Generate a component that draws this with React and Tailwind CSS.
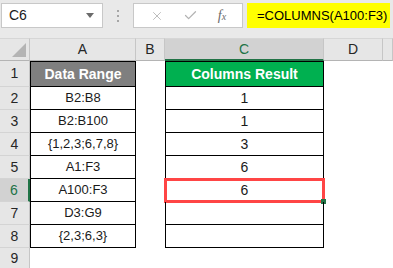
import React from 'react';
import { X, Check } from 'lucide-react';

const rows = [
  { n: 1, a: 'Data Range', c: 'Columns Result', head: true },
  { n: 2, a: 'B2:B8', c: '1' },
  { n: 3, a: 'B2:B100', c: '1' },
  { n: 4, a: '{1,2,3;6,7,8}', c: '3' },
  { n: 5, a: 'A1:F3', c: '6' },
  { n: 6, a: 'A100:F3', c: '6', selected: true },
  { n: 7, a: 'D3:G9', c: '' },
  { n: 8, a: '{2,3;6,3}', c: '' },
];

const App = () => {
  return (
    <div
      className="w-[393px] h-[268px] overflow-hidden bg-white text-[#1a1a1a]"
      style={{ fontFamily: '"Liberation Sans", Arial, sans-serif' }}
    >
      {/* Formula bar */}
      <div className="h-[38px] bg-[#e9e9e9] flex items-start pt-[3px] pl-[1px]">
        <div className="w-[102px] h-[25px] bg-white border border-[#c8c8c8] flex items-center justify-between pl-[7px] pr-[8px] text-[14px]">
          <span>C6</span>
          <svg width="8" height="5" viewBox="0 0 8 5">
            <path d="M0 0 L8 0 L4 5 Z" fill="#6b6b6b" />
          </svg>
        </div>
        <div className="w-[30px] h-[25px] flex flex-col items-center justify-center gap-[3px]">
          <span className="w-[2px] h-[2px] bg-[#a6a6a6]" />
          <span className="w-[2px] h-[2px] bg-[#a6a6a6]" />
          <span className="w-[2px] h-[2px] bg-[#a6a6a6]" />
        </div>
        <div className="w-[110px] h-[25px] bg-white border border-[#c8c8c8] flex items-center justify-around px-[6px]">
          <X className="w-[14px] h-[14px] text-[#b3b3b3]" strokeWidth={1.5} />
          <Check className="w-[15px] h-[15px] text-[#b3b3b3]" strokeWidth={2} />
          <span
            className="italic text-[14px] text-[#6b6b6b]"
            style={{ fontFamily: '"Liberation Serif", serif' }}
          >
            f<span className="text-[10px]">x</span>
          </span>
        </div>
        <div className="ml-[4px] w-[143px] h-[25px] bg-[#ffff00] flex items-center pl-[10px] text-[13px] text-black">
          =COLUMNS(A100:F3)
        </div>
      </div>

      {/* Sheet */}
      <div className="grid grid-cols-[30px_106px_29px_159px_59px_1fr] grid-rows-[23px_26px_repeat(7,23px)_20px] text-[14px]">
        {/* column headers */}
        <div className="relative bg-[#e6e6e6] border-t border-[#d6d6d6] border-r border-b border-r-[#c6c6c6] border-b-[#b4b4b4]">
          <svg className="absolute right-[3px] bottom-[3px]" width="14" height="14" viewBox="0 0 14 14">
            <path d="M14 0 L14 14 L0 14 Z" fill="#b4b4b4" />
          </svg>
        </div>
        {['A', 'B', 'C', 'D', ''].map((l) => (
          <div
            key={l || 'E'}
            className={
              l === 'C'
                ? 'bg-[#d2d2d2] border-t border-[#d6d6d6] border-r border-r-[#c6c6c6] border-b-2 border-b-[#217346] flex items-center justify-center text-[#217346]'
                : 'bg-[#e6e6e6] border-t border-[#d6d6d6] border-r border-r-[#c6c6c6] border-b border-b-[#b4b4b4] flex items-center justify-center text-[#262626]'
            }
          >
            {l}
          </div>
        ))}

        {/* data rows */}
        {rows.map((r) => (
          <React.Fragment key={r.n}>
            <div
              className={
                r.selected
                  ? 'bg-[#d2d2d2] border-b border-[#d4d4d4] border-r-2 border-r-[#217346] flex items-center justify-center text-[#217346]'
                  : 'bg-[#e6e6e6] border-b border-[#d4d4d4] border-r border-r-[#c6c6c6] flex items-center justify-center text-[#262626]'
              }
            >
              {r.n}
            </div>
            <div
              className={
                r.head
                  ? 'bg-[#7f7f7f] text-white font-bold text-[14px] border border-black flex items-center justify-center'
                  : 'text-[13px] border-x border-b border-black flex items-center justify-center'
              }
            >
              {r.a}
            </div>
            <div />
            <div
              className={
                r.head
                  ? 'bg-[#00b050] text-white font-bold text-[14px] border border-black flex items-center justify-center'
                  : 'relative border-x border-b border-black flex items-center justify-center'
              }
            >
              {r.c}
              {r.selected && (
                <>
                  <div className="absolute -top-[1px] -left-[2px] -right-[2px] -bottom-[2px] border-[3px] border-[#ff4545]" />
                  <div className="absolute -right-[3px] -bottom-[3px] w-[5px] h-[5px] bg-[#217346]" />
                </>
              )}
            </div>
            <div />
            <div />
          </React.Fragment>
        ))}

        {/* row 9 */}
        <div className="bg-[#e6e6e6] border-r border-[#c6c6c6] flex items-center justify-center text-[#262626]">
          9
        </div>
        <div />
        <div />
        <div />
        <div />
        <div />
      </div>
    </div>
  );
};

export default App;
